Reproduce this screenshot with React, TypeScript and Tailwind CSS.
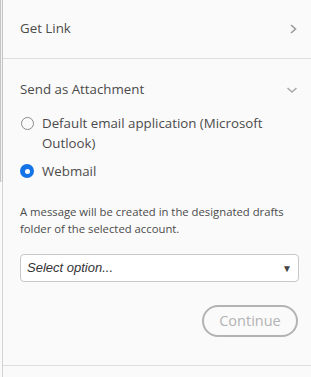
import React from 'react';

const ChevronRight = () => (
  <svg width="10" height="12" viewBox="0 0 10 12" fill="none">
    <path d="M3 2l4.5 4L3 10" stroke="#9a9a9a" strokeWidth="1.6" />
  </svg>
);

const ChevronDown = () => (
  <svg width="12" height="8" viewBox="0 0 12 8" fill="none">
    <path d="M1.5 2l4.5 4 4.5-4" stroke="#a8a8a8" strokeWidth="1.5" />
  </svg>
);

export default function App() {
  return (
    <div className="w-[311px] h-[377px] bg-[#fafafa] flex font-['Open_Sans',sans-serif] text-[#4b4b4b] overflow-hidden">
      {/* left edge: panel border + scroll thumb */}
      <div className="w-[3px] shrink-0 flex flex-col">
        <div className="h-[182px] w-[3px] border-l border-r border-[#c4c4c4] bg-[#f4f4f4]" />
        <div className="flex-1 w-[3px] border-r border-[#d4d4d4]" />
      </div>

      <div className="flex-1 flex flex-col">
        <div className="h-[59px] flex items-center justify-between pl-[17px] pr-[13px] border-b border-[#dedede]">
          <span className="text-[13.3px] -mt-[1px]">Get Link</span>
          <ChevronRight />
        </div>

        <div className="pl-[17px] pr-[12px] pt-[19px] h-[307px] border-b border-[#dedede]">
          <div className="flex items-center justify-between h-[24px] pr-[1px]">
            <span className="text-[13.3px]">Send as Attachment</span>
            <ChevronDown />
          </div>

          <div className="mt-[11px] flex items-start gap-[8px]">
            <span className="mt-[4px] w-[13px] h-[13px] rounded-full border-[1.5px] border-[#8a8a8a] shrink-0 ml-[1px]" />
            <span className="text-[13.3px] leading-[20px]">Default email application (Microsoft Outlook)</span>
          </div>

          <div className="mt-[8px] flex items-center gap-[8px]">
            <span className="w-[14px] h-[14px] rounded-full bg-[#1473e6] flex items-center justify-center shrink-0">
              <span className="w-[5px] h-[5px] rounded-full bg-white" />
            </span>
            <span className="text-[13.3px] leading-[20px]">Webmail</span>
          </div>

          <p className="mt-[22px] text-[11.3px] leading-[17px]">
            A message will be created in the designated drafts folder of the selected account.
          </p>

          <div className="mt-[17px] h-[28px] rounded-[4px] border border-[#c8c8c8] bg-white flex items-center justify-between pl-[6px] pr-[6px]">
            <span className="text-[13px] italic text-[#333] font-['Liberation_Sans',sans-serif]">Select option...</span>
            <span className="text-[10px] text-[#444]">▼</span>
          </div>

          <div className="mt-[23px] flex justify-end pr-[1px]">
            <button className="w-[96px] h-[32px] rounded-full border-2 border-[#b3b3b3] text-[#b3b3b3] text-[14.5px] flex items-center justify-center">
              Continue
            </button>
          </div>
        </div>
      </div>
    </div>
  );
}
